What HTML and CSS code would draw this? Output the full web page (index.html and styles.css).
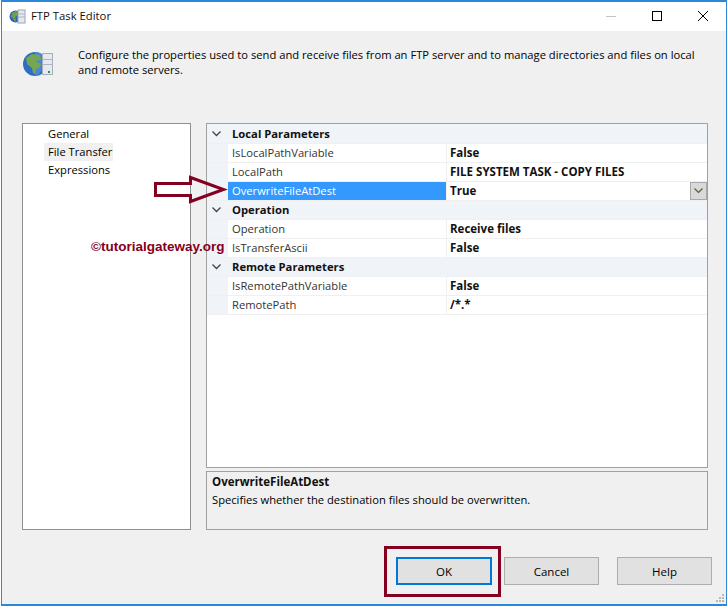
FILE: index.html
```html
<!DOCTYPE html>
<html lang="en">
<head>
<meta charset="utf-8">
<title>FTP Task Editor</title>
<link rel="stylesheet" href="styles.css">
</head>
<body>
<div class="window">
  <header class="titlebar">
    <svg class="app-icon" width="17" height="16" viewBox="0 0 17 16">
      <circle cx="6.5" cy="8.5" r="6" fill="#2f66b8"/>
      <path d="M3 5l4-2 2 2-1 3-2 1 1 3-1 2-2-4-2-1z" fill="#6fa04a"/>
      <rect x="9" y="2" width="7" height="13" fill="#e4e8f0" stroke="#9aa5b5"/>
      <path d="M9 6h7M9 9h7" stroke="#aeb7c4"/>
    </svg>
    <span class="title">FTP Task Editor</span>
    <div class="controls">
      <svg width="12" height="12" viewBox="0 0 12 12"><path d="M1 6.5h10" stroke="#c4c4c4"/></svg>
      <svg width="12" height="12" viewBox="0 0 12 12"><rect x="1.5" y="1.5" width="9" height="9" fill="none" stroke="#000"/></svg>
      <svg width="12" height="12" viewBox="0 0 12 12"><path d="M1 1l10 10M11 1L1 11" stroke="#000"/></svg>
    </div>
  </header>
  <div class="body">
    <section class="intro">
      <svg class="intro-icon" width="32" height="26" viewBox="0 0 32 26">
        <circle cx="13" cy="13" r="12" fill="#2f6cc4"/>
        <path d="M13 1a12 12 0 0 1 8 3v14l-4 5a12 12 0 0 1-4 2z" fill="#4a86d8"/>
        <path d="M4 7l6-4 8 1 1 5-6 1 6 3-2 4-3 1-1 5-2-1-1-5-5-4z" fill="#75a752"/>
        <rect x="20.500" y="2.500" width="10" height="21" fill="#e6eaef" stroke="#a5aebb"/>
        <path d="M20 8.500h11M20 13.500h11" stroke="#aeb6c2"/>
        <rect x="26" y="20" width="2" height="2" fill="#3f8a3a"/>
      </svg>
      <p class="intro-text">Configure the properties used to send and receive files from an FTP server and to manage directories and files on local and remote servers.</p>
    </section>
    <div class="panes">
      <nav class="nav">
        <div class="nav-item">General</div>
        <div class="nav-item selected">File Transfer</div>
        <div class="nav-item">Expressions</div>
      </nav>
      <div class="right">
        <div class="grid">
          <div class="row group"><span class="chev"><svg width="9" height="6" viewBox="0 0 9 6"><path d="M.5.500l4 4 4-4" fill="none" stroke="#444" stroke-width="1.300"/></svg></span><span class="group-name">Local Parameters</span></div>
          <div class="row"><span class="gutter"></span><span class="name">IsLocalPathVariable</span><span class="value">False</span></div>
          <div class="row"><span class="gutter"></span><span class="name">LocalPath</span><span class="value">FILE SYSTEM TASK - COPY FILES</span></div>
          <div class="row active"><span class="gutter"></span><span class="name">OverwriteFileAtDest</span><span class="value">True</span>
            <span class="drop"><svg width="9" height="6" viewBox="0 0 9 6"><path d="M.5.500l4 4 4-4" fill="none" stroke="#55603c" stroke-width="1.200"/></svg></span>
          </div>
          <div class="row group"><span class="chev"><svg width="9" height="6" viewBox="0 0 9 6"><path d="M.5.500l4 4 4-4" fill="none" stroke="#444" stroke-width="1.300"/></svg></span><span class="group-name">Operation</span></div>
          <div class="row"><span class="gutter"></span><span class="name">Operation</span><span class="value">Receive files</span></div>
          <div class="row"><span class="gutter"></span><span class="name">IsTransferAscii</span><span class="value">False</span></div>
          <div class="row group"><span class="chev"><svg width="9" height="6" viewBox="0 0 9 6"><path d="M.5.500l4 4 4-4" fill="none" stroke="#444" stroke-width="1.300"/></svg></span><span class="group-name">Remote Parameters</span></div>
          <div class="row"><span class="gutter"></span><span class="name">IsRemotePathVariable</span><span class="value">False</span></div>
          <div class="row"><span class="gutter"></span><span class="name">RemotePath</span><span class="value">/*.*</span></div>
        </div>
        <div class="desc">
          <div class="desc-title">OverwriteFileAtDest</div>
          <div class="desc-text">Specifies whether the destination files should be overwritten.</div>
        </div>
      </div>
    </div>
    <footer class="buttons">
      <button class="btn primary">OK</button>
      <button class="btn cancel">Cancel</button>
      <button class="btn help">Help</button>
    </footer>
  </div>
  <svg class="arrow" width="76" height="30" viewBox="0 0 76 30">
    <path d="M1.500 8.500h35V2.500l33 12-33 12V20.500h-35z" fill="none" stroke="#850020" stroke-width="3"/>
  </svg>
  <div class="watermark">©tutorialgateway.org</div>
  <div class="okbox"></div>
  <svg class="grip" width="10" height="10" viewBox="0 0 10 10"><path d="M7 1h2v2H7zM4 4h2v2H4zM7 4h2v2H7zM1 7h2v2H1zM4 7h2v2H4zM7 7h2v2H7z" fill="#b8b8b8"/></svg>
</div>
</body>
</html>
```
FILE: styles.css
```css
* { box-sizing: border-box; }
html, body { margin: 0; padding: 0; }
body { width: 728px; height: 606px; overflow: hidden; background: #fff; padding: 0 1px; font-family: "Open Sans", "Liberation Sans", sans-serif; font-size: 11.2px; color: #000; }
.window { position: relative; width: 726px; height: 606px; border: 1px solid #2b88d8; border-width: 2px 1px; display: flex; flex-direction: column; }
.titlebar { height: 29px; flex: none; background: #fff; display: flex; align-items: center; padding: 0 0 2px 7px; }
.app-icon { flex: none; margin-right: 5px; }
.title { font-size: 11.3px; color: #111; flex: 1; }
.controls { display: flex; gap: 34px; padding-right: 17px; align-items: center; }
.body { flex: 1; background: #f0f0f0; display: flex; flex-direction: column; min-height: 0; }
.intro { height: 92px; flex: none; display: flex; padding: 16px 0 0 20px; }
.intro-icon { flex: none; margin: 4px 24px 0 0; }
.intro-text { margin: 0; width: 632px; line-height: 15px; }
.panes { height: 407px; flex: none; display: flex; gap: 15px; padding-left: 20px; }
.nav { width: 169px; background: #fff; border: 1px solid #8c9196; padding-top: 1px; padding-left: 21px; }
.nav-item { height: 18px; line-height: 17px; padding-left: 4px; width: 69px; white-space: nowrap; }
.selected { background: #f0f0f0; }
.right { width: 502px; display: flex; flex-direction: column; gap: 3px; }
.grid { height: 345px; background: #fff; border: 1px solid #a0a0a0; }
.row { height: 19px; display: flex; position: relative; border-bottom: 1px solid #f0f0f0; }
.row:first-child { height: 20px; padding-top: 1px; }
.group { background: #f0f4f9; }
.chev { width: 21px; display: flex; align-items: center; justify-content: center; padding-right: 2px; }
.group-name { font-weight: 700; padding-left: 4px; line-height: 18px; color: #111; font-size: 11.25px; }
.gutter { width: 21px; background: #f0f4f9; flex: none; }
.name { width: 218px; padding-left: 4px; line-height: 18px; color: #333; flex: none; }
.value { font-size: 11.5px; font-weight: 700; padding-left: 3px; border-left: 1px solid #f0f0f0; line-height: 18px; flex: 1; color: #111; }
.active .name { background: #3399ff; color: #fff; }
.drop { position: absolute; right: 0; top: 0; width: 17px; height: 18px; background: #d8d9d8; border: 1px solid #a9a9a9; display: flex; align-items: center; justify-content: center; }
.desc { height: 59px; border: 1px solid #a0a0a0; padding: 1px 5px; line-height: 18px; }
.desc-title { font-weight: 700; color: #111; font-size: 11.5px; }
.buttons { flex: 1; position: relative; display: flex; padding: 27px 0 0 394px; }
.btn { height: 28px; width: 95px; background: #e1e1e1; border: 1px solid #adadad; font: inherit; font-size: 11.5px; color: #000; padding: 0; }
.primary { width: 96px; border: 2px solid #0078d7; }
.cancel { margin-left: 12px; }
.help { margin-left: 18px; }
.arrow { position: absolute; left: 152px; top: 173px; }
.watermark { position: absolute; left: 89px; top: 237px; font-family: "Liberation Sans", sans-serif; font-size: 13.500px; font-weight: 700; color: #850020; white-space: nowrap; }
.okbox { position: absolute; left: 382px; top: 544px; width: 117px; height: 51px; border: 3px solid #850020; }
.grip { position: absolute; right: 1px; bottom: 1px; }
```
